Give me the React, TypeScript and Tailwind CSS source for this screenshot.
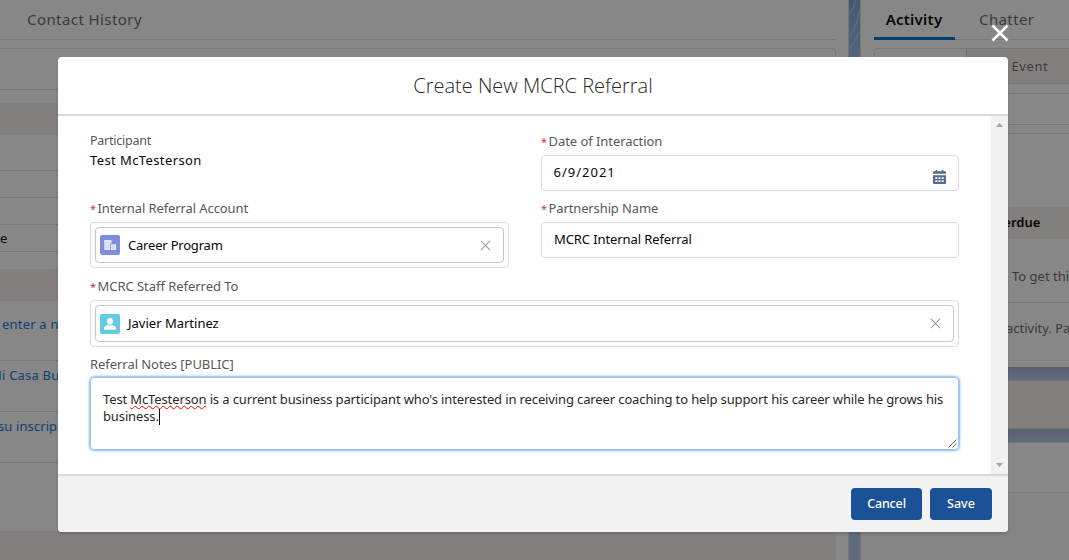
import type { ReactNode } from 'react';

function Label({ children, required, className = '' }: { children: ReactNode; required?: boolean; className?: string }) {
  return (
    <div className={`flex h-[18px] items-center whitespace-nowrap text-[13px] leading-[18px] text-[#5a5856] ${className}`}>
      {required && <span className="w-[7.5px] shrink-0 pt-px text-[11px] tracking-normal text-[#c23934]">*</span>}
      <span>{children}</span>
    </div>
  );
}

function CloseX({ className, width }: { className: string; width: number }) {
  return (
    <svg viewBox="0 0 12 12" className={className} fill="none" stroke="currentColor" strokeWidth={width}>
      <path d="M1 1 11 11M11 1 1 11" />
    </svg>
  );
}

function AccountIcon() {
  return (
    <span className="flex size-5 shrink-0 items-center justify-center rounded-[2px] bg-[#7f8de1]">
      <svg viewBox="0 0 20 20" className="size-5">
        <path d="M4.200 5h7.300v3.500H10v6.500H4.200z" fill="#e4e8fb" />
        <path d="M10.800 9.300h5.300v5.700h-5.300z" fill="#e4e8fb" />
        <path d="M4.200 7.700h5.500M4.200 10.300h5.500M4.200 12.700h5.500M12 11.400h3M12 13.300h3" stroke="#bcc4f1" strokeWidth=".6" />
      </svg>
    </span>
  );
}

function ContactIcon() {
  return (
    <span className="flex size-5 shrink-0 items-center justify-center rounded-[2px] bg-[#62cae4]">
      <svg viewBox="0 0 20 20" className="size-5" fill="#fff">
        <ellipse cx="10" cy="7.300" rx="3" ry="3.400" />
        <path d="M8.200 10.900q1.800 1 3.600 0c2.400.7 4.200 1.500 4.200 3.200v.6q0 1-.9 1H4.900q-.9 0-.9-1v-.6c0-1.700 1.800-2.500 4.200-3.200z" />
      </svg>
    </span>
  );
}

function CalendarIcon() {
  return (
    <svg viewBox="0 0 13 14" className="h-[14px] w-[13px]" fill="#54698d">
      <path d="M0 2.200Q0 1.200 1 1.200h1.500V.6q0-.6.6-.6h.6q.6 0 .6.600v.6h4.400V.6q0-.6.6-.6h.6q.6 0 .6.600v.6H12q1 0 1 1V3.800H0z" />
      <path d="M0 5.200h13V13q0 1-1 1H1q-1 0-1-1z" />
      <path d="M2.300 7.200h2v1.700h-2zM5.500 7.200h2v1.700h-2zM8.700 7.200h2v1.700h-2zM2.300 10.200h2v1.700h-2zM5.500 10.200h2v1.700h-2zM8.700 10.200h2v1.700h-2z" fill="#fff" />
    </svg>
  );
}

function Lookup({ icon, children, className }: { icon: ReactNode; children: ReactNode; className: string }) {
  return (
    <div className={`rounded-[4px] border border-[#dddbda] p-1 ${className}`}>
      <div className="flex h-full items-center rounded-[4px] border border-[#c9c7c5] pl-1 pr-3">
        {icon}
        <span className="ml-2 flex-1 whitespace-nowrap text-[13px] text-[#080707]">{children}</span>
        <CloseX width={1.1} className="size-[11px] text-[#9b9997]" />
      </div>
    </div>
  );
}

function LeftPanel() {
  return (
    <div className="flex h-full w-[848px] shrink-0 flex-col overflow-hidden bg-[#878787] text-[13px]">
      <div className="mr-3 flex h-10 shrink-0 items-center border-b border-[#777575] pl-[27px] text-[15px] tracking-[0.42px] text-[#3c3b3b]">Contact History</div>
      <div className="mr-3 mt-2 h-[42px] shrink-0 rounded-tr-[4px] border-y border-r border-[#777575]" />
      <div className="mr-3 mt-[13px] h-8 shrink-0 bg-[#837f7f]" />
      <div className="mr-3 h-9 shrink-0 border-b border-[#777575]" />
      <div className="mr-3 h-[27px] shrink-0 border-b border-[#777575]" />
      <div className="mr-3 h-[27px] shrink-0 border-b border-[#777575]" />
      <div className="mr-3 flex h-[27px] shrink-0 items-center border-b border-[#777575] pt-[2px] text-[#080707]">e</div>
      <div className="mr-3 mt-[17px] h-8 shrink-0 bg-[#837f7f]" />
      <div className="mr-3 h-[60px] shrink-0 border-b border-[#777575] pl-[2px] pt-[13px] leading-5 tracking-[0.2px] text-[#0d4272]">enter a n</div>
      <div className="mr-3 flex h-[51px] shrink-0 border-b border-[#777575] pt-[4px] leading-5 text-[#0d4272]">
        <span className="-ml-[10px] whitespace-nowrap tracking-[0.2px]">Mi Casa Bu</span>
      </div>
      <div className="mr-3 flex h-[51px] shrink-0 border-b border-[#777575] pt-[4px] leading-5 text-[#0d4272]">
        <span className="-ml-[2px] whitespace-nowrap tracking-[0.1px]">su inscrip</span>
      </div>
      <div className="mr-3 mt-[68px] h-10 shrink-0 bg-[#837f7f]" />
    </div>
  );
}

function RightPanel() {
  return (
    <div className="flex h-full flex-1 flex-col overflow-hidden bg-[#878787] text-[13px] text-[#3c3b3b]">
      <div className="ml-[13px] flex h-10 shrink-0 border-b border-[#777575] text-[15px]">
        <div className="-mb-px flex w-[81px] shrink-0 items-center justify-center border-b-[3px] border-[#013e73] pr-px pt-[2px] text-[15px] font-semibold tracking-[0.25px] text-[#080707]">Activity</div>
        <div className="flex items-center pl-6 tracking-[0.4px]">Chatter</div>
      </div>
      <div className="ml-[13px] mt-2 flex h-9 shrink-0 rounded-tl-[4px] border-y border-l border-[#777575]">
        <div className="w-[92px] shrink-0 border-r border-[#777575]" />
        <div className="flex flex-1 items-center bg-[#837f7f] pl-[44.5px] pt-px text-[13px] tracking-[0.6px]">Event</div>
      </div>
      <div className="ml-[13px] mt-[9px] h-8 shrink-0 border-y border-[#777575]" />
      <div className="mt-2 h-[74px] shrink-0 border-t border-[#777575]" />
      <div className="flex h-8 shrink-0 items-center bg-[#837f7f] pl-[125px] font-semibold text-[#080707]">Overdue</div>
      <div className="flex h-16 shrink-0 items-center border-b border-[#777575] pl-[151px] pt-3">
        <span className="whitespace-nowrap">To get thi</span>
      </div>
      <div className="h-[64px] shrink-0 pl-[145px] pt-[15px] leading-5">
        <span className="whitespace-nowrap">activity. Pa</span>
      </div>
      <div className="h-[13px] shrink-0 bg-linear-to-b from-[#566070] to-[#626d7e]" />
      <div className="h-[49px] shrink-0 border-y border-[#777575] bg-[#837f7f]" />
      <div className="h-[13px] shrink-0 bg-linear-to-b from-[#566070] to-[#626d7e]" />
      <div className="h-[51px] shrink-0 border-y border-t-[#777575] border-b-[#7c7c7c]" />
      <div className="flex-1 bg-[#858585]" />
    </div>
  );
}

function ReferralModal() {
  return (
    <section className="absolute left-[58px] top-[57px] flex h-[475px] w-[950px] flex-col overflow-hidden rounded-[4px] bg-white shadow-[0_2px_3px_rgba(0,0,0,0.16)]">
      <header className="flex h-[59px] shrink-0 items-center justify-center border-b-2 border-[#dddbda] pt-px font-['Open_Sans',sans-serif] text-[20px] font-light text-[#2b2826]">
        Create New MCRC Referral
      </header>
      <div className="flex h-[358px] shrink-0">
        <div className="flex w-[933px] flex-col pl-8 pr-8 pt-4">
          <div className="flex justify-between">
            <div className="w-[419px]">
              <Label><span className="relative -top-px text-[12.5px] tracking-[-0.25px]">Participant</span></Label>
              <div className="mt-px h-[18px] text-[13px] leading-[18px] tracking-[0.4px] text-[#080707]">Test McTesterson</div>
              <Label required className="mt-[30px] tracking-[-0.1px]">Internal Referral Account</Label>
              <Lookup icon={<AccountIcon />} className="mt-[5px] h-[46px]"><span className="relative top-px tracking-[-0.2px]">Career Program</span></Lookup>
            </div>
            <div className="w-[418px]">
              <Label required className="tracking-[-0.06px]">Date of Interaction</Label>
              <div className="mt-[5px] flex h-9 items-center justify-between rounded-[4px] border border-[#dddbda] pl-[11.5px] pr-3 text-[13px] text-[#080707]">
                <span className="tracking-[1px]">6/9/2021</span>
                <span className="pt-2"><CalendarIcon /></span>
              </div>
              <Label required className="mt-[8px] tracking-[-0.12px]">Partnership Name</Label>
              <div className="mt-[5px] flex h-9 items-center rounded-[4px] border border-[#dddbda] px-3 text-[13px] tracking-[-0.1px] text-[#080707]">MCRC Internal Referral</div>
            </div>
          </div>
          <Label required className="mt-[9px] tracking-[-0.04px]">MCRC Staff Referred To</Label>
          <Lookup icon={<ContactIcon />} className="mt-[5px] h-[47px]">Javier Martinez</Lookup>
          <Label className="mt-[8px] tracking-[-0.05px]">Referral Notes [PUBLIC]</Label>
          <div className="relative mt-[4px] h-[73px] shrink-0 rounded-[4px] border border-[#9fc5ea] px-3 pt-[13px] text-[13px] leading-[17px] tracking-[-0.125px] text-[#2b2826] shadow-[0_0_3px_#0070d2]">
            <div className="whitespace-nowrap">
              Test <span className="underline decoration-[#f00] decoration-wavy decoration-[1px] underline-offset-[1px]">McTesterson</span> is a current business participant who's interested in receiving career coaching to help support his career while he grows his
            </div>
            <div className="flex items-center">business.<span className="h-[16px] w-px bg-black" /></div>
            <svg viewBox="0 0 9 9" className="absolute bottom-px right-px size-[9px]" stroke="#555" strokeWidth=".9">
              <path d="M.5 8.500l8-8M4.500 8.500l4-4" />
            </svg>
          </div>
        </div>
        <div className="flex w-[17px] shrink-0 flex-col items-center justify-between bg-[#f1f1f1] pb-[7px] pt-[7px]">
          <svg viewBox="0 0 7 4" className="h-1 w-[7px]" fill="#a3a3a3"><path d="M0 4 3.500 0 7 4z" /></svg>
          <svg viewBox="0 0 7 4" className="h-1 w-[7px]" fill="#a3a3a3"><path d="M0 0 3.500 4 7 0z" /></svg>
        </div>
      </div>
      <footer className="flex flex-1 items-center justify-end gap-2 border-t-2 border-[#dddbda] bg-[#f3f2f2] pr-4 text-[12.5px] font-medium text-white">
        <button className="h-8 w-[71px] rounded-[4px] bg-[#1b5297] tracking-[-0.15px]">Cancel</button>
        <button className="h-8 w-[62px] rounded-[4px] bg-[#1b5297]">Save</button>
      </footer>
    </section>
  );
}

export default function App() {
  return (
    <main className="relative h-[560px] w-[1069px] overflow-hidden bg-[#878787] font-['Noto_Sans',sans-serif]">
      <div className="flex h-full">
        <LeftPanel />
        <div className="w-[13px] shrink-0 border-x border-[#777575] bg-linear-to-b from-[#435a75] via-[#5d6a7e] via-15% to-[#5f6b7d]">
          <svg viewBox="0 0 11 57" className="h-[57px] w-[11px]" fill="none" stroke="#62788f" strokeWidth=".8">
            <path d="M7 0Q5 9 0 14M11 9Q8 27 0 37M11 31Q7 41 0 49" />
          </svg>
        </div>
        <RightPanel />
      </div>
      <ReferralModal />
      <button aria-label="Close" className="absolute left-[991px] top-[24px]">
        <CloseX width={1.7} className="size-[18px] text-white" />
      </button>
    </main>
  );
}
